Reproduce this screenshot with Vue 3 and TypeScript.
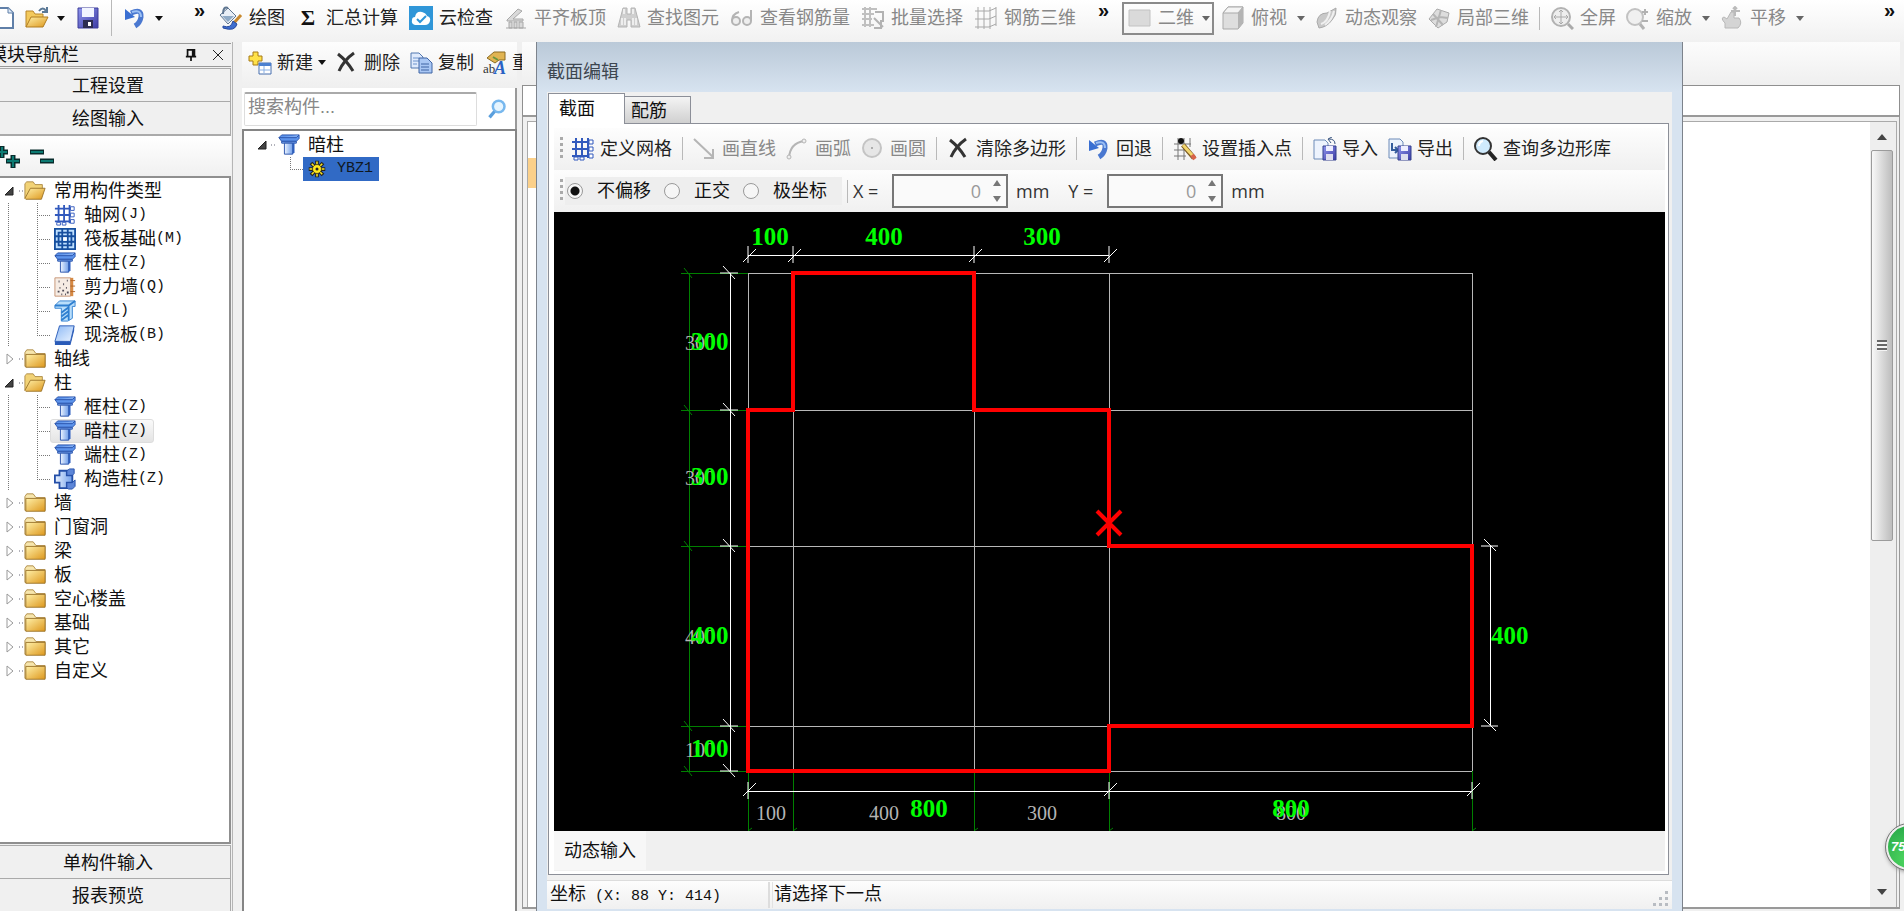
<script setup lang="ts">
import { ref } from 'vue'

interface Tool { icon?: string; label?: string; off?: boolean; caret?: boolean; sep?: boolean }
interface Leaf { icon: string; label: string; key: string; selected?: boolean }
interface Group { label: string; open?: boolean; children?: Leaf[] }

const icons: Record<string, string> = {
  page: '<path d="M-4 2H8l5 5v15H-4z" fill="#fff" stroke="#5f7fa8" stroke-width="2"/><path d="M8 2v5h5" fill="#dce8f6" stroke="#5f7fa8"/>',
  open: '<path d="M1 21V5h7l2 3h8v4" fill="#f3c95c" stroke="#b8862b"/><path d="M1 21 6 11h17l-5 10z" fill="url(#gold)" stroke="#b07c20"/><path d="M14 5q4-5 7 0M22 1v5h-5" fill="none" stroke="#5a7896" stroke-width="2"/>',
  save: '<path d="M2 2h20v20H2z" fill="url(#disk)" stroke="#3d3c9a"/><path d="M6 2h12v9H6z" fill="#f1f4ff"/><path d="M7 14h10v8H7z" fill="#2c2c50"/><path d="M12 16h3v4h-3z" fill="#fff"/>',
  undo: '<path d="M8 7Q19 2 18 11q-1 6-6 9" fill="none" stroke="#4a78d0" stroke-width="5"/><path d="M2 3v11l10-3z" fill="#3a6fd2"/><path d="M9 6q9-3 9 5" fill="none" stroke="#9cc0f4" stroke-width="2"/>',
  paint: '<path d="M1 9 9 2l8 8-8 8z" fill="#e8eef6" stroke="#5f7690"/><path d="M9 2q-5-2-5 6" fill="none" stroke="#5f7690" stroke-width="2"/><path d="m3 10 12 0-6 6z" fill="#8faac6"/><path d="m22 9-8 9" stroke="#c8892e" stroke-width="3"/><path d="M4 20q8 3 10-5l4 3q-2 8-14 4z" fill="#3e6ecf" stroke="#27499c"/>',
  sigma: '<text x="12" y="19" text-anchor="middle" font-family="Liberation Serif" font-size="22" font-weight="bold" fill="#111">Σ</text>',
  cloud: '<path d="M0 0h24v24H0z" fill="#2f96d8"/><path d="M6 19q-4-1-3-5 0-3 3-3 1-6 7-5 4 1 5 4 4 1 3 5-1 4-5 4z" fill="#fff"/><path d="m8 13 3 3 6-6" fill="none" stroke="#2f96d8" stroke-width="2"/>',
  align: '<path d="M3 14 14 3l4 2-9 8h10v2H3zM5 16h3v6H5zM10 16h3v6h-3zM15 16h4v6h-4zM2 22h20" fill="#d9d9d9" stroke="#a8a8a8"/>',
  binoc: '<path d="M6 2h4v6h4V2h4l5 19h-9v-7h-4v7H1z" fill="#cfcfcf" stroke="#b4b4b4"/><path d="M5 12v7M8 12v7M16 12v7M19 12v7M7 3v5M16 3v5" stroke="#eee" stroke-width="2"/>',
  glasses: '<path d="M9 6q-7 2-7 9M21 4v11" fill="none" stroke="#b4b4b4" stroke-width="2"/><circle cx="6" cy="15" r="4" fill="#eee" stroke="#b4b4b4" stroke-width="2"/><circle cx="17" cy="15" r="4" fill="#eee" stroke="#b4b4b4" stroke-width="2"/>',
  batch: '<path d="M1 3h15M1 8h12M1 13h10M1 19h12M4 1v20M9 1v20" stroke="#c0c0c0" stroke-width="2"/><path d="M14 6h8v10M13 12l9 9M20 14v8h-7" fill="none" stroke="#b3b3b3" stroke-width="2"/>',
  rebar: '<path d="M1 5h14l7-3M1 13h14l7-3M1 21h14l7-3M4 1v22M10 1v22M16 1v22M22 1v19" fill="none" stroke="#a8a8a8" stroke-width="1"/>',
  flat: '<path d="M1 4h21v16H1z" fill="#dadada" stroke="#c2c2c2"/>',
  cube: '<path d="M2 7 7 1h15v16l-5 6H2z" fill="#dedede" stroke="#a9a9a9"/><path d="M2 7 7 1h15l-5 6z" fill="#f4f4f4" stroke="#a9a9a9"/><path d="m17 7 5-6v16l-5 6z" fill="#b4b4b4"/>',
  orbit: '<path d="M2 16Q3 7 12 7l9-5q1 7-4 12-5 7-13 8z" fill="#c9c9c9" stroke="#aaa"/><path d="M6 18q7-2 9-13M10 19Q17 14 19 5" fill="none" stroke="#f0f0f0" stroke-width="2"/>',
  local: '<path d="m2 13 8-10 12 4-2 9-9 6z" fill="#ddd" stroke="#aaa"/><path d="m6 8 10 11M14 4l-5 17M4 14l9-3 8 1" fill="none" stroke="#b5b5b5" stroke-width="2"/>',
  full: '<circle cx="11" cy="11" r="9" fill="#eee" stroke="#b2b2b2" stroke-width="2"/><path d="M11 4v14M4 11h14M9 6l2-2 2 2M9 16l2 2 2-2M6 9l-2 2 2 2M16 9l2 2-2 2" fill="none" stroke="#aaa" stroke-width="1"/><path d="m18 18 5 5" stroke="#aaa" stroke-width="3"/>',
  zoomer: '<circle cx="9" cy="11" r="8" fill="#f0f0f0" stroke="#c2c2c2" stroke-width="2"/><path d="m14 18 4 5" stroke="#b2b2b2" stroke-width="3"/><path d="M19 3v6M16 6h6M16 15h6" stroke="#b2b2b2" stroke-width="2"/>',
  pan: '<path d="M5 22v-5q-5-5-1-6l3 2 4-7h3v6h5q4 5-1 10z" fill="#d4d4d4" stroke="#b8b8b8"/><path d="M15 1v9M11 5h9M13 3l2-2 2 2" fill="none" stroke="#bbb" stroke-width="2"/>',
  create: '<path d="M5 1h5v4h4v5h-4v4H5v-4H1V5h4z" fill="#ffe24a" stroke="#a77b16"/><path d="M11 12h12v11H11z" fill="#fff" stroke="#466fae"/><path d="M11 12h12v3H11z" fill="#4c80d0"/><path d="M12 19h10M16 15v7" stroke="#8ab0e4"/>',
  cross: '<path d="M3 3q9 7 15 17M19 2Q9 9 4 20" fill="none" stroke="#333" stroke-width="3"/>',
  copy: '<path d="M2 2h8l4 4v11H2z" fill="#dfeafc" stroke="#5378b0"/><path d="M4 7h6M4 10h6M4 13h4" stroke="#6d93cc"/><path d="M10 7h8l5 5v10H10z" fill="#a9c7f4" stroke="#3f64a4"/><path d="M12 13h8M12 16h8M12 19h8" stroke="#3f64a4"/>',
  rename: '<path d="m4 7 7-6h11v8h-6l-4 3z" fill="#e1b452" stroke="#8b6b22"/><path d="m10 6 5 3" stroke="#6a963f" stroke-width="2"/><text x="0" y="22" font-family="Liberation Serif" font-size="13" fill="#333">ab</text><text x="11" y="23" font-family="Liberation Serif" font-style="italic" font-weight="bold" font-size="18" fill="#2862c4">A</text>',
  find: '<circle cx="14" cy="9" r="7" fill="#e6f5ff" stroke="#78b8ee" stroke-width="3"/><path d="m9 15-6 7" stroke="#5a9fdd" stroke-width="4"/>',
  grid: '<path d="M1 5h17M1 12h17M1 19h21M5 1v22M11 1v22M17 1v20" fill="none" stroke="#3159bd" stroke-width="2"/><path d="M18 3h4v4h-4zM18 10h4v4h-4zM18 17h4v4h-4zM3 20h4v3H3zM9 20h4v3H9z" fill="#fff" stroke="#3159bd" stroke-width="1"/>',
  raft: '<path d="M1 1h22v22H1z" fill="#bfe0ff" stroke="#164f9f" stroke-width="2"/><path d="M5 5h14v14H5zM9 9h6v6H9zM9 1v8M15 1v8M9 15v8M15 15v8M1 9h8M15 9h8M1 15h8M15 15h8" fill="none" stroke="#164f9f" stroke-width="2"/><path d="M10 10h4v4h-4z" fill="#fff"/>',
  column: '<path d="m1 4 3-3h19v4l-3 3H4z" fill="#5d94ec" stroke="#244fa8"/><path d="M1 4h19l3-3M4 8h16v2H4z" fill="#7eaaf0" stroke="#244fa8"/><path d="M7 10h9v12H7z" fill="url(#col)" stroke="#244fa8"/><path d="m16 10 2-1v11l-2 2z" fill="#2d5fc0"/>',
  wall: '<path d="M1 2h17v20H1z" fill="#f6ece4" stroke="#c59272"/><path d="M18 2h3v20h-3z" fill="#d78a43"/><path d="M5 6h1M10 9h1M14 5h1M6 13h1M13 13h1M4 17h2M9 16h2M14 18h2M8 20h1M12 20h1" stroke="#4e4a55" stroke-width="2"/><path d="M18 5h5M18 11h5M18 17h5" stroke="#b06325"/>',
  beam: '<path d="m1 6 5-5h17v6h-3v13l-5 3H8V9H1z" fill="#b9defb" stroke="#2f7fd0"/><path d="M1 6h15l7-5M16 6v16M8 14l8-6M8 18l8-6M8 22l8-6" fill="none" stroke="#2f7fd0" stroke-width="2"/>',
  slab: '<path d="M6 2h16l-4 17H1z" fill="url(#slabg)" stroke="#2a5bb8" stroke-width="1"/><path d="M1 19h17l4-17v5l-4 16H1z" fill="#2a5bb8"/>',
  struct: '<path d="M6 3h8v5h6v8h-6v6H6v-6H1V8h5z" fill="url(#col)" stroke="#244fa8" stroke-width="2"/><path d="M14 3l3-2h5v5l-2 2h-6zM20 16l3-3v7l-3 3h-4l-2-1v-6z" fill="#5d86d8" stroke="#244fa8"/>',
  folder: '<path d="M1 20V5l2-3h7l3 4h10v14z" fill="#f7e6ad" stroke="#ad8a45"/><path d="M2 7h21v14H2z" fill="url(#gold)" stroke="#9a732a"/>',
  folderOpen: '<path d="M1 20V4l2-2h7l2 3h8v5" fill="#f2d377" stroke="#ad8a45"/><path d="m1 20 6-11h16l-4 12H2z" fill="url(#gold)" stroke="#9a732a"/>',
  gear: '<path d="M12 1v22M1 12h22M4 4l16 16M20 4 4 20" stroke="#222" stroke-width="5"/><path d="M12 2v20M2 12h20M5 5l14 14M19 5 5 19" stroke="#ffe91f" stroke-width="2"/><circle cx="12" cy="12" r="6" fill="#ffe91f" stroke="#222"/><circle cx="12" cy="12" r="2" fill="#222"/>',
  line: '<path d="m1 2 19 18M20 12v9h-9" fill="none" stroke="#b5b5b5" stroke-width="2"/>',
  arc: '<path d="M3 21Q4 6 18 4" fill="none" stroke="#b5b5b5" stroke-width="2"/><circle cx="3" cy="20" r="2" fill="#eee" stroke="#b5b5b5"/><circle cx="18" cy="4" r="2" fill="#eee" stroke="#b5b5b5"/>',
  circle: '<circle cx="11" cy="11" r="9" fill="#e6e6e6" stroke="#c4c4c4" stroke-width="2"/><circle cx="11" cy="11" r="1" fill="#999"/>',
  insert: '<path d="M1 7h17M1 13h13M1 19h12M5 1v22M11 1v22M17 1v9" stroke="#777" stroke-width="1"/><circle cx="8" cy="4" r="3" fill="#111"/><path d="m10 8 11 13" stroke="#7b5a22" stroke-width="5"/><path d="m10 8 10 11" stroke="#f2d66d" stroke-width="3"/><path d="m19 18 3 4" stroke="#d9634a" stroke-width="4"/>',
  import: '<path d="M1 3h11l3 3v16H1z" fill="#edf3fd" stroke="#6d8bb8"/><path d="M22 7q0-5-6-5M19 0l-4 2 3 4" fill="none" stroke="#34507c" stroke-width="1"/><path d="M10 9h13v14H10z" fill="url(#disk)" stroke="#35408e"/><path d="M13 9h7v5h-7z" fill="#eef"/><path d="M13 17h7v6h-7z" fill="#dde"/>',
  export: '<path d="M1 2h11l3 3v16H1z" fill="#edf3fd" stroke="#6d8bb8"/><path d="M4 6v7h5M7 10l3 3-3 3" fill="none" stroke="#345c9c" stroke-width="2"/><path d="M10 9h13v14H10z" fill="url(#disk)" stroke="#35408e"/><path d="M13 9h7v5h-7z" fill="#eef"/><path d="M13 17h7v6h-7z" fill="#dde"/>',
  query: '<circle cx="9" cy="9" r="8" fill="#cfeafc" stroke="#333" stroke-width="2"/><path d="M5 9q0-4 4-5" fill="none" stroke="#fff" stroke-width="2"/><path d="m15 15 7 8" stroke="#222" stroke-width="4"/>'
}

const drawTools: Tool[] = [
  { icon: 'paint', label: '绘图' }, { icon: 'sigma', label: '汇总计算' }, { icon: 'cloud', label: '云检查' },
  { icon: 'align', label: '平齐板顶', off: true }, { icon: 'binoc', label: '查找图元', off: true },
  { icon: 'glasses', label: '查看钢筋量', off: true }, { icon: 'batch', label: '批量选择', off: true },
  { icon: 'rebar', label: '钢筋三维', off: true }
]
const viewTools: Tool[] = [
  { icon: 'cube', label: '俯视', off: true, caret: true }, { icon: 'orbit', label: '动态观察', off: true },
  { icon: 'local', label: '局部三维', off: true }, { sep: true }, { icon: 'full', label: '全屏', off: true },
  { icon: 'zoomer', label: '缩放', off: true, caret: true }, { icon: 'pan', label: '平移', off: true, caret: true }
]
const partTools: Tool[] = [
  { icon: 'create', label: '新建', caret: true }, { icon: 'cross', label: '删除' },
  { icon: 'copy', label: '复制' }, { icon: 'rename', label: '重命名' }
]
const polyTools: Tool[] = [
  { icon: 'grid', label: '定义网格' }, { sep: true }, { icon: 'line', label: '画直线', off: true },
  { icon: 'arc', label: '画弧', off: true }, { icon: 'circle', label: '画圆', off: true }, { sep: true },
  { icon: 'cross', label: '清除多边形' }, { sep: true }, { icon: 'undo', label: '回退' }, { sep: true },
  { icon: 'insert', label: '设置插入点' }, { sep: true }, { icon: 'import', label: '导入' },
  { icon: 'export', label: '导出' }, { sep: true }, { icon: 'query', label: '查询多边形库' }
]
const tree: Group[] = [
  { label: '常用构件类型', open: true, children: [
    { icon: 'grid', label: '轴网', key: '(J)' }, { icon: 'raft', label: '筏板基础', key: '(M)' },
    { icon: 'column', label: '框柱', key: '(Z)' }, { icon: 'wall', label: '剪力墙', key: '(Q)' },
    { icon: 'beam', label: '梁', key: '(L)' }, { icon: 'slab', label: '现浇板', key: '(B)' } ] },
  { label: '轴线' },
  { label: '柱', open: true, children: [
    { icon: 'column', label: '框柱', key: '(Z)' }, { icon: 'column', label: '暗柱', key: '(Z)', selected: true },
    { icon: 'column', label: '端柱', key: '(Z)' }, { icon: 'struct', label: '构造柱', key: '(Z)' } ] },
  { label: '墙' }, { label: '门窗洞' }, { label: '梁' }, { label: '板' }, { label: '空心楼盖' },
  { label: '基础' }, { label: '其它' }, { label: '自定义' }
]

const mode = ref('none')
const modes = [{ id: 'none', label: '不偏移' }, { id: 'ortho', label: '正交' }, { id: 'polar', label: '极坐标' }]
const axes = [{ id: 'x', label: 'X =' }, { id: 'y', label: 'Y =' }]
const keyword = ref('')
const view = ref('二维')

// Drawing coordinates of the section grid
const xs = [748, 793, 974, 1109, 1472]
const ys = [273, 410, 546, 726, 771]
const outline = '793,273 974,273 974,410 1109,410 1109,546 1472,546 1472,726 1109,726 1109,771 748,771 748,410 793,410'
const sideLabels = [{ t: '300', y: 350 }, { t: '300', y: 485 }, { t: '400', y: 644 }, { t: '100', y: 757 }]
const topLabels = [{ t: '100', x: 770 }, { t: '400', x: 884 }, { t: '300', x: 1042 }]
const baseLabels = [{ t: '100', x: 771 }, { t: '400', x: 884 }, { t: '300', x: 1042 }, { t: '800', x: 1291 }]
</script>

<template>
  <div class="app">
    <svg class="defs" aria-hidden="true">
      <defs>
        <linearGradient id="gold" x1="0" y1="0" x2="1" y2="1"><stop offset="0" stop-color="#fff0a8" /><stop offset="1" stop-color="#dd971c" /></linearGradient>
        <linearGradient id="disk" x1="0" y1="0" x2="1" y2="1"><stop offset="0" stop-color="#8f96ee" /><stop offset="1" stop-color="#3c3ba4" /></linearGradient>
        <linearGradient id="col" x1="0" y1="0" x2="1" y2="0"><stop offset="0" stop-color="#eef5ff" /><stop offset="1" stop-color="#6f9eea" /></linearGradient>
        <linearGradient id="slabg" x1="0" y1="0" x2="1" y2="1"><stop offset="0" stop-color="#8db9f5" /><stop offset="1" stop-color="#eaf3ff" /></linearGradient>
      </defs>
    </svg>

    <header class="topbar">
      <div class="quick">
        <button class="tool" aria-label="新建文件"><svg class="ic half" viewBox="0 0 14 24" v-html="icons.page" /></button>
        <button class="tool" aria-label="打开"><svg class="ic" viewBox="0 0 24 24" v-html="icons.open" /><i class="caret" /></button>
        <button class="tool" aria-label="保存"><svg class="ic" viewBox="0 0 24 24" v-html="icons.save" /></button>
        <span class="sep tall" />
        <button class="tool" aria-label="撤销"><svg class="ic" viewBox="0 0 24 24" v-html="icons.undo" /><i class="caret" /></button>
        <span class="more">»</span>
      </div>
      <div class="draw">
        <button v-for="t in drawTools" :key="t.label" class="tool" :disabled="t.off">
          <svg class="ic" viewBox="0 0 24 24" v-html="icons[t.icon!]" />{{ t.label }}
        </button>
        <span class="more">»</span>
      </div>
      <div class="views">
        <label class="pick">
          <svg class="ic" viewBox="0 0 24 24" v-html="icons.flat" />
          <select v-model="view" aria-label="视图"><option>二维</option></select>
          <i class="caret dim" />
        </label>
        <template v-for="(t, i) in viewTools" :key="i">
          <span v-if="t.sep" class="sep" />
          <button v-else class="tool" :disabled="t.off">
            <svg class="ic" viewBox="0 0 24 24" v-html="icons[t.icon!]" />{{ t.label }}<i v-if="t.caret" class="caret dim" />
          </button>
        </template>
        <span class="more">»</span>
      </div>
    </header>

    <main class="work">
      <aside class="nav">
        <div class="nav-title">
          <span class="clip">模块导航栏</span>
          <button aria-label="固定"><svg width="12" height="14" viewBox="0 0 14 16"><path d="M3 2h8v8H3zM1 10h12M7 10v5M9 2v8" fill="none" stroke="#111" stroke-width="2" /></svg></button>
          <button aria-label="关闭"><svg width="14" height="14" viewBox="0 0 14 14"><path d="m2 2 10 10M12 2 2 12" stroke="#222" /></svg></button>
        </div>
        <button class="bar">工程设置</button>
        <button class="bar">绘图输入</button>
        <div class="nav-tools">
          <svg width="56" height="32" viewBox="0 0 56 32"><path d="M2 4v12M-4 10H8M13 13v13M6 19h14M30 10h14M40 19h14" stroke="#082c2c" stroke-width="5" /><path d="M2 5v10M-4 10H7M13 14v11M7 19h12M31 10h12M41 19h12" stroke="#0c7a72" stroke-width="2" /></svg>
        </div>
        <ul class="tree">
          <li v-for="g in tree" :key="g.label">
            <div class="row">
              <svg width="24" height="24" viewBox="0 0 24 24">
                <path v-if="g.open" d="M13 8v8H5z" fill="#444" stroke="#222" />
                <path v-else d="M7 7v10l6-5z" fill="#fff" stroke="#999" />
                <path d="M19 12h5" stroke="#667" stroke-dasharray="1 2" />
              </svg>
              <svg class="ic small" viewBox="0 0 24 24" v-html="g.open ? icons.folderOpen : icons.folder" />
              <span class="name">{{ g.label }}</span>
            </div>
            <ul v-if="g.children">
              <li v-for="(c, i) in g.children" :key="c.label" class="row">
                <svg width="50" height="24" viewBox="0 0 50 24" shape-rendering="crispEdges">
                  <path :d="`M8 0v24M37 0v${i === g.children.length - 1 ? 12 : 24}M37 12h13`" fill="none" stroke="#777" stroke-dasharray="1 1" />
                </svg>
                <span class="leaf" :class="{ on: c.selected }">
                  <svg class="ic small" viewBox="0 0 24 24" v-html="icons[c.icon]" />{{ c.label }}<span class="mono">{{ c.key }}</span>
                </span>
              </li>
            </ul>
          </li>
        </ul>
        <button class="bar">单构件输入</button>
        <button class="bar">报表预览</button>
      </aside>

      <section class="parts">
        <div class="parts-tools">
          <button v-for="t in partTools" :key="t.label" class="tool">
            <svg class="ic" viewBox="0 0 24 24" v-html="icons[t.icon!]" />{{ t.label }}<i v-if="t.caret" class="caret" />
          </button>
        </div>
        <div class="search">
          <input v-model="keyword" type="text" placeholder="搜索构件..." aria-label="搜索构件" />
          <button aria-label="搜索"><svg width="20" height="20" viewBox="0 0 24 24" v-html="icons.find" /></button>
        </div>
        <div class="part-tree">
          <div class="row">
            <svg width="34" height="24" viewBox="0 0 34 24"><path d="M22 8v8h-8z" fill="#444" stroke="#222" /><path d="M27 12h6" stroke="#667" stroke-dasharray="1 2" /></svg>
            <svg class="ic small" viewBox="0 0 24 24" v-html="icons.column" />
            <span class="name">暗柱</span>
          </div>
          <div class="row">
            <svg width="59" height="24" viewBox="0 0 59 24" shape-rendering="crispEdges"><path d="M46 0v12h13" fill="none" stroke="#777" stroke-dasharray="1 1" /></svg>
            <span class="chosen"><svg width="18" height="18" viewBox="0 0 24 24" v-html="icons.gear" /><span class="mono">YBZ1</span></span>
          </div>
        </div>
      </section>

      <section class="stage">
        <div class="stage-bar" />
        <div class="stage-head" />
        <div class="stage-body">
          <div class="mark" />
          <div class="scroll">
            <button aria-label="向上"><i class="tri up" /></button>
            <div class="thumb"><i /></div>
            <button class="down" aria-label="向下"><i class="tri" /></button>
          </div>
        </div>
      </section>
    </main>

    <div class="ball">75</div>

    <section class="dialog" role="dialog" aria-label="截面编辑">
      <h1>截面编辑</h1>
      <div class="client">
        <div class="tabs" role="tablist">
          <button class="tab on" role="tab" aria-selected="true">截面</button>
          <button class="tab" role="tab" aria-selected="false">配筋</button>
        </div>
        <div class="panel">
          <div class="strip poly">
            <i class="grip" />
            <template v-for="(t, i) in polyTools" :key="i">
              <span v-if="t.sep" class="sep" />
              <button v-else class="tool" :disabled="t.off">
                <svg class="ic" viewBox="0 0 24 24" v-html="icons[t.icon!]" />{{ t.label }}
              </button>
            </template>
          </div>
          <div class="strip">
            <i class="grip" />
            <div class="modes">
              <label v-for="m in modes" :key="m.id"><input v-model="mode" type="radio" name="mode" :value="m.id" />{{ m.label }}</label>
            </div>
            <span class="sep" />
            <div v-for="a in axes" :key="a.id" class="axis">
              <label :for="a.id">{{ a.label }}</label>
              <span class="spin">
                <input :id="a.id" type="text" value="0" disabled />
                <span class="steps"><button aria-label="增加" disabled><i class="tri up" /></button><button aria-label="减少" disabled><i class="tri" /></button></span>
              </span>
              <span>mm</span>
            </div>
          </div>
          <div class="canvas">
            <svg viewBox="554 212 1111 619" preserveAspectRatio="xMidYMin meet">
              <g stroke="#008000" fill="none">
                <g shape-rendering="crispEdges">
                  <path d="M689 273V771" />
                  <path v-for="y in ys" :key="'g' + y" :d="`M681 ${y}H748`" />
                  <path v-for="x in xs" :key="'v' + x" :d="`M${x} 771V831`" />
                </g>
                <path v-for="y in ys" :key="'t' + y" :d="`M684 ${y - 5}l8 10`" />
                <path v-for="x in xs" :key="'b' + x" :d="`M${x} 831l4-3`" />
              </g>
              <g stroke="#b8b8b8" shape-rendering="crispEdges">
                <path v-for="y in ys" :key="'h' + y" :d="`M748 ${y}H1472`" />
                <path v-for="x in xs" :key="'x' + x" :d="`M${x} 273V771`" />
              </g>
              <g class="grey">
                <text v-for="(l, i) in sideLabels" :key="i" x="685" :y="l.y">{{ l.t }}</text>
                <text v-for="l in baseLabels" :key="l.x" :x="l.x" y="820" text-anchor="middle">{{ l.t }}</text>
              </g>
              <g stroke="#fff" fill="none">
                <path shape-rendering="crispEdges" d="M748 255H1109M730 273V771M748 791H1472M1490 546V726" />
                <path v-for="x in xs.slice(0, 4)" :key="'u' + x" :d="`M${x} 246v17M${x - 5} 262l13-13`" />
                <path v-for="y in ys" :key="'l' + y" :d="`M720 ${y}h18M723 ${y - 7}l12 13`" />
                <path v-for="x in [748, 1109, 1472]" :key="'d' + x" :d="`M${x} 782v17M${x - 5} 796l13-13`" />
                <path v-for="y in [546, 726]" :key="'r' + y" :d="`M1481 ${y}h17M1484 ${y - 7}l12 12`" />
              </g>
              <g class="green">
                <text v-for="l in topLabels" :key="l.x" :x="l.x" y="245" text-anchor="middle">{{ l.t }}</text>
                <text v-for="(l, i) in sideLabels" :key="i" x="691" :y="l.y">{{ l.t }}</text>
                <text x="929" y="817" text-anchor="middle">800</text>
                <text x="1291" y="817" text-anchor="middle">800</text>
                <text x="1491" y="644">400</text>
              </g>
              <polygon :points="outline" fill="none" stroke="#f00" stroke-width="4" />
              <path d="m1097 511 24 24M1121 511l-24 24" stroke="#f00" stroke-width="4" />
            </svg>
          </div>
          <div class="foot"><button>动态输入</button></div>
        </div>
      </div>
      <footer class="status">
        <span class="pos">坐标<span class="mono">&nbsp;(X: 88 Y: 414)</span></span>
        <span class="hint">请选择下一点</span>
        <svg width="16" height="16" viewBox="0 0 16 16"><path d="M12 0h3v3h-3zM6 6h3v3H6zM12 6h3v3h-3zM0 12h3v3H0zM6 12h3v3H6zM12 12h3v3h-3z" fill="#b8bcc2" /></svg>
      </footer>
    </section>
  </div>
</template>

<style>
body { margin: 0; overflow: hidden; }
</style>

<style scoped>
.app { position: relative; display: flex; flex-direction: column; height: 100vh; min-width: 1200px; overflow: hidden; background: #f0f0f0; color: #111; font: 18px/24px "Liberation Sans", "Noto Sans CJK SC", sans-serif; }
.app * { box-sizing: border-box; }
.defs { position: absolute; width: 0; height: 0; }
button { margin: 0; padding: 0; border: 0; background: none; font: inherit; color: inherit; white-space: nowrap; }
ul { margin: 0; padding: 0; list-style: none; }
.ic { width: 24px; height: 24px; flex: none; overflow: hidden; }
.ic.half { width: 14px; }
.ic.small { width: 22px; height: 22px; }
.mono { font-family: "Liberation Mono", monospace; font-size: 15px; white-space: pre; }
.tool { display: flex; align-items: center; gap: 6px; flex: none; color: #222; }
.tool:disabled { color: #888; }
.caret { flex: none; width: 0; height: 0; border: 4px solid transparent; border-top: 5px solid #111; border-bottom: 0; margin-left: 4px; }
.caret.dim { border-top-color: #666; }
.sep { width: 1px; height: 23px; flex: none; background: #b9b9b9; }

.topbar { display: flex; flex: none; height: 42px; padding-bottom: 6px; background: linear-gradient(#fff, #f1f1f1); }
.quick, .draw, .views { display: flex; align-items: center; }
.quick { width: 213px; gap: 11px; flex: none; }
.quick .tool { gap: 4px; }
.quick .more { margin-left: auto; }
.sep.tall { height: 36px; }
.draw { gap: 11px; width: 904px; padding-left: 6px; flex: none; }
.draw .more { margin-left: auto; }
.views { flex: 1; gap: 10px; padding: 0 1px 0 5px; }
.views .more { margin-left: auto; }
.more { align-self: flex-start; width: 19px; line-height: 20px; font-size: 20px; font-weight: bold; }
.pick { display: flex; align-items: center; gap: 4px; width: 92px; height: 33px; padding: 0 4px; border: 2px solid #8b8b8b; margin-right: -3px; }
.pick select { appearance: none; width: 40px; flex: none; padding: 0 0 0 2px; border: 0; background: none; font: inherit; color: #888; }
.pick .caret { margin-left: 2px; }

.work { display: flex; flex: 1; min-height: 0; }
.nav { display: flex; flex-direction: column; flex: none; width: 233px; margin-right: 9px; border-right: 1px solid #b5b5b5; padding-right: 1px; }
.nav-title { display: flex; align-items: center; gap: 14px; height: 24px; flex: none; margin: 1px 0; padding-right: 6px; border: solid #999; border-width: 1px 0; overflow: hidden; }
.clip { margin-left: -11px; margin-right: auto; }
.nav-title button { display: flex; }
.bar { flex: none; height: 33px; padding: 1px 14px 0 0; border-top: 1px solid #aaa; border-right: 1px solid #aaa; background: #f0f0f0; text-align: center; }
.nav-tools { flex: none; height: 42px; padding-top: 6px; border-top: 2px solid #aaa; background: linear-gradient(#fff, #f0f0f0); }
.tree { flex: 1; min-height: 0; overflow: hidden; padding-top: 1px; margin-bottom: 1px; background: #fff; border: solid #8f8f8f; border-width: 2px 2px 2px 0; }
.row { display: flex; align-items: center; height: 24px; white-space: nowrap; }
.row > svg { flex: none; }
.name { padding-left: 8px; }
.leaf { display: flex; align-items: center; height: 24px; padding: 0 6px 0 3px; border: 1px solid transparent; border-radius: 3px; }
.leaf svg { margin-right: 8px; }
.leaf.on { border-color: #ddd; background: linear-gradient(#fafafa, #e4e4e4); }

.parts { display: flex; flex-direction: column; flex: none; width: 275px; margin-right: 5px; }
.parts-tools { display: flex; align-items: center; gap: 9px; height: 46px; padding: 0 0 5px 6px; background: linear-gradient(#fdfdfd, #efefef); }
.parts-tools .tool { gap: 5px; }
.parts-tools .caret { margin-left: 0; }
.search { display: flex; align-items: center; height: 41px; padding: 3px 8px 3px 2px; background: #fff; border-right: 2px solid #999; }
.search input { flex: 1; min-width: 0; height: 34px; padding: 0 3px 3px; border: 1px solid #ddd; border-top: 2px solid #aaa; border-radius: 2px; font: inherit; background: #fff; }
.search input::placeholder { color: #888; opacity: 1; }
.search button { display: flex; margin-left: 10px; }
.part-tree { flex: 1; padding-top: 2px; border: solid #858585; border-width: 2px 2px 0 2px; background: #fff; }
.chosen { display: flex; align-items: center; width: 76px; height: 24px; padding-left: 5px; gap: 11px; background: #316ac5; color: #101820; }

.stage { display: flex; flex-direction: column; flex: 1; min-width: 0; padding-right: 4px; }
.stage-bar { flex: none; height: 43px; background: linear-gradient(#fcfcfc, #efefef); }
.stage-head { flex: none; height: 32px; border: 1px solid #8f8f8f; border-bottom: 2px solid #999; background: #fff; }
.stage-body { display: flex; flex: 1; margin-bottom: 2px; padding: 4px 2px 0 4px; border: solid #999; border-width: 0 1px 2px; }
.mark { flex: 1; border: 1px solid #aaa; border-right: 0; border-bottom: 0; background: linear-gradient(#fbd08a, #fbd08a) 0 36px / 12px 30px no-repeat, #fff; }
.scroll { display: flex; flex-direction: column; width: 27px; padding: 2px 3px 2px 1px; border: solid #aaa; border-width: 1px 1px 0 0; background: #eee; }
.scroll button { display: flex; justify-content: center; align-items: center; height: 26px; }
.scroll .down { margin-top: auto; }
.thumb { display: flex; align-items: center; justify-content: center; height: 50%; border: 1px solid #9b9b9b; border-radius: 2px; background: linear-gradient(90deg, #f8f8f8, #d4d4d4 60%, #bdbdbd); }
.thumb i { width: 10px; height: 11px; background: repeating-linear-gradient(#666 0 2px, #f4f4f4 2px 4px); }
.tri { width: 0; height: 0; border: 5px solid transparent; border-top: 6px solid #444; border-bottom: 0; }
.tri.up { border-bottom: 6px solid #444; border-top: 0; }

.ball { position: absolute; right: -28px; bottom: 41px; width: 46px; height: 46px; padding-left: 3px; border: 2px solid #eee; border-radius: 50%; outline: 1px solid #777; background: radial-gradient(circle at 50% 80%, #4fd860, #25a447); box-shadow: 0 2px 4px #999; color: #fff; font: italic bold 13px/42px "Liberation Sans", sans-serif; }

.dialog { position: absolute; top: 42px; right: 221px; bottom: 0; left: 536px; display: flex; flex-direction: column; padding: 0 10px 2px; border: solid #7d838c; border-width: 0 1px; background: linear-gradient(#bac9d8, #d7e3f0 50px); }
h1 { flex: none; height: 50px; margin: 0; padding-top: 18px; font-size: 18px; font-weight: normal; line-height: 24px; color: #3d4650; }
.client { display: flex; flex: 1; flex-direction: column; min-height: 0; padding: 0 3px 5px 1px; background: #f0f0f0; }
.tabs { display: flex; align-items: flex-end; height: 31px; flex: none; }
.tab { width: 66px; height: 27px; padding: 1px 0 0 6px; border: solid #8c8f98; border-width: 1px 1px 0 0; background: linear-gradient(#f4f4f4, #d0d0d0); text-align: left; }
.tab.on { z-index: 1; width: 77px; height: 31px; margin-bottom: -1px; padding: 0 0 1px 10px; border-left-width: 1px; background: #fff; }
.panel { display: flex; flex: 1; flex-direction: column; min-height: 0; padding: 4px 3px 3px 5px; border: 1px solid #8c8f98; background: #fff; }
.strip { display: flex; align-items: center; flex: none; height: 42px; padding-left: 6px; background: linear-gradient(#fdfdfd, #f0f0f0); }
.poly { gap: 10px; padding-bottom: 1px; }
.poly .grip { margin-right: -2px; }
.poly .tool { gap: 5px; }
.grip { flex: none; width: 3px; height: 24px; background: repeating-linear-gradient(#aaa 0 3px, transparent 3px 6px); }
.modes { display: flex; height: 28px; width: 277px; flex: none; margin: 0 5px 0 2px; gap: 11px; background: #eee; }
.modes label { display: flex; align-items: center; }
.modes input { appearance: none; width: 16px; height: 16px; flex: none; margin: 0 14px 0 2px; border: 1px solid #999; border-radius: 50%; background: #f6f6f6; }
.modes input:checked { background: radial-gradient(#111 4px, #f6f6f6 5px); }
.axis { display: flex; align-items: center; margin: 0 14px 0 5px; font: 18px/24px "Open Sans", "Noto Sans", sans-serif; color: #333; }
.axis label { width: 39px; }
.axis > span:last-child { margin-left: 8px; }
.spin { display: flex; width: 116px; height: 34px; border: 2px solid #777; background: #fafafa; }
.spin input { flex: 1; min-width: 0; padding: 0 7px 0 0; border: 0; background: none; text-align: right; font: inherit; color: #999; }
.steps { display: flex; flex-direction: column; justify-content: space-between; width: 18px; padding: 4px 0; align-items: center; }
.steps button { display: flex; }
.steps .tri { border-width: 6px 4px 0; border-top-color: #777; }
.steps .up { border-width: 0 4px 6px; border-bottom-color: #777; }
.canvas { flex: 1; min-height: 0; background: #000; }
.canvas svg { display: block; width: 100%; height: 100%; }
.green { fill: #0f0; font: bold 25px "Liberation Serif", serif; }
.grey { fill: #b4b4b4; font: 20px "Liberation Serif", serif; }
.foot { display: flex; height: 40px; flex: none; background: #f0f0f0; }
.foot button { height: 39px; padding: 0 10px; background: #f7f7f7; }
.status { display: flex; align-items: center; flex: none; height: 29px; background: linear-gradient(#fdfdfd, #f0f0f0); border-top: 1px solid #ddd; }
.pos { width: 223px; height: 26px; padding-left: 3px; border-right: 2px solid #ddd; }
.hint { flex: 1; height: 26px; margin-left: 2px; padding-left: 1px; border-left: 1px solid #e2e2e2; }
.status svg { align-self: flex-end; margin: 0 3px 2px 0; }
</style>
